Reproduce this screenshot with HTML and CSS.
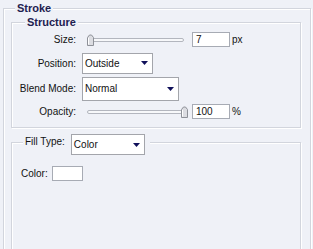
FILE: index.html
```html
<!DOCTYPE html>
<html lang="en">
<head>
	<meta charset="UTF-8">
	<title>Stroke</title>
	<link rel="stylesheet" href="styles.css">
</head>
<body>
	<fieldset class="group outer">
		<legend class="title outer-title">Stroke</legend>
		<div class="outer-body">
			<fieldset class="group structure">
				<legend class="title structure-title">Structure</legend>
				<div class="form">
					<span class="label">Size:</span>
					<div class="control">
						<div class="slider">
							<div class="track"></div>
							<svg class="thumb" style="left: 0px" width="9" height="12" viewBox="0 0 9 12"><path d="M1.5 11.5 V3.5 L3.5 1 H5.5 L7.5 3.5 V11.5 Z" fill="#dcdde2" stroke="#8e9198"/><path d="M2.5 10.5 V4" stroke="#fff"/></svg>
						</div>
						<div class="field">7</div>
						<span class="unit">px</span>
					</div>

					<span class="label">Position:</span>
					<div class="control">
						<div class="select position">Outside<svg class="arrow" width="7" height="4" viewBox="0 0 7 4"><path d="M0 0 H7 L3.5 4 Z"/></svg></div>
					</div>

					<span class="label">Blend Mode:</span>
					<div class="control">
						<div class="select blend">Normal<svg class="arrow" width="7" height="4" viewBox="0 0 7 4"><path d="M0 0 H7 L3.5 4 Z"/></svg></div>
					</div>

					<span class="label">Opacity:</span>
					<div class="control">
						<div class="slider">
							<div class="track"></div>
							<svg class="thumb" style="left: 94px" width="9" height="12" viewBox="0 0 9 12"><path d="M1.5 11.5 V3.5 L3.5 1 H5.5 L7.5 3.5 V11.5 Z" fill="#dcdde2" stroke="#8e9198"/><path d="M2.5 10.5 V4" stroke="#fff"/></svg>
						</div>
						<div class="field">100</div>
						<span class="unit">%</span>
					</div>
				</div>
			</fieldset>

			<fieldset class="group fill">
				<legend class="fill-legend">
					<span class="fill-label">Fill Type:</span>
					<div class="select fill-select">Color<svg class="arrow" width="7" height="4" viewBox="0 0 7 4"><path d="M0 0 H7 L3.5 4 Z"/></svg></div>
				</legend>
				<div class="color-row">
					<span>Color:</span>
					<div class="swatch"></div>
				</div>
			</fieldset>
		</div>
	</fieldset>
</body>
</html>
```

FILE: styles.css
```css
:root {
	--bg: #eff1f7;
	--etch: #d2d5dd;
	--box: #a7abb4;
}

* { box-sizing: border-box; margin: 0; padding: 0; }

html, body { height: 100%; overflow: hidden; }

body {
	background: var(--bg);
	font-family: "Liberation Sans", Arial, sans-serif;
	font-size: 10px;
	color: #111;
}

.group {
	border: 1px solid var(--etch);
	box-shadow: 1px 1px 0 #fff, inset 1px 1px 0 #fff;
	min-width: 0;
}

.title {
	font-weight: bold;
	font-size: 11px;
	line-height: 13px;
	color: #1e2150;
	padding: 0 2px;
	background: var(--bg);
}

/* runs one pixel past the window so its bottom edge stays hidden */
.outer {
	margin: 2px 2px 0 3px;
	height: 249px;
}
.outer-title { margin-left: 11px; }

.outer-body {
	padding: 1px 9px 0 7px;
}

.structure-title { margin-left: 13px; }

.form {
	display: grid;
	grid-template-columns: 64px 1fr;
	grid-template-rows: 21px 26px 25px 21px;
	column-gap: 6px;
	align-items: center;
	padding-bottom: 5px;
}

.label { text-align: right; }

.control {
	display: flex;
	align-items: center;
}

.slider {
	position: relative;
	width: 100px;
	height: 12px;
	margin-left: 4px;
}

.track {
	margin: 4px 2px 0 1px;
	height: 4px;
	border: 1px solid #b3b6be;
	border-radius: 2px;
	background: #f7f8fa;
}

.thumb {
	position: absolute;
	top: 0;
}

.field {
	width: 38px;
	height: 15px;
	margin-left: 6px;
	padding-left: 3px;
	line-height: 13px;
	background: #fff;
	border: 1px solid var(--box);
}

.unit { margin-left: 2px; }

.select {
	display: flex;
	align-items: center;
	justify-content: space-between;
	background: #fff;
	border: 1px solid #a3a5ab;
	padding: 0 4px 0 2px;
}
.arrow { fill: #10105a; }

.position { width: 71px; height: 21px; }
.blend { width: 97px; height: 24px; }

.fill {
	margin-top: 6px;
	height: 116px;
}

.fill-legend {
	display: flex;
	align-items: flex-start;
	height: 16px;
	margin-left: 11px;
	padding: 0 5px 0 2px;
	background: var(--bg);
}
.fill-label { line-height: 16px; }
.fill-select {
	width: 74px;
	height: 21px;
	margin-left: 6px;
}

.color-row {
	display: flex;
	align-items: center;
	gap: 4px;
	padding: 16px 0 0 9px;
}

.swatch {
	width: 31px;
	height: 15px;
	background: #fff;
	border: 1px solid var(--box);
}
```
